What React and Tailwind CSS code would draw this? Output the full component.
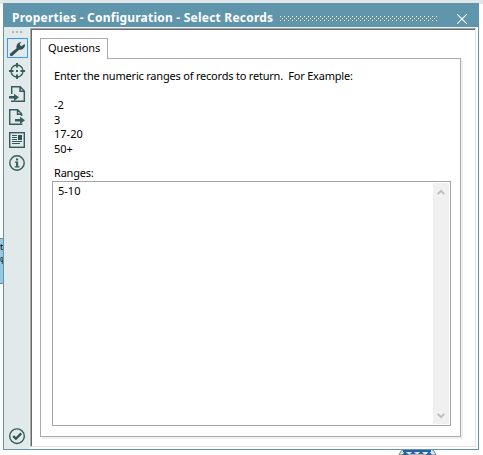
import React from "react";

function ToolIcon({ children }) {
  return (
    <svg width="17" height="17" viewBox="0 0 17 17" fill="none" stroke="#365b5c" strokeWidth="1.4" className="block">
      {children}
    </svg>
  );
}

function Toolbar() {
  return (
    <div className="flex w-[26px] shrink-0 flex-col items-center border-r border-[#edf2f2] bg-[#e1e9ea] pl-px">
      <div className="mt-[4px] flex h-[2px] gap-[2px]">
        <span className="h-[2px] w-[2px] bg-[#b5b8b8]" />
        <span className="h-[2px] w-[2px] bg-[#b5b8b8]" />
        <span className="h-[2px] w-[2px] bg-[#b5b8b8]" />
      </div>
      <button className="mt-[5px] ml-px flex h-[20px] w-[21px] items-center justify-center border border-[#3399ff]">
        <ToolIcon>
          <path d="M1.2 15.6C.6 14.8.8 14 1.5 13.3L7.6 8.3C6.9 5.2 8.8 2.2 12.4 2L10.6 4.4L12.2 6.2L14.9 4.4L16 4.2C16.3 7.7 13.6 10 10.1 9.8L3.8 15.6C2.9 16.3 1.8 16.3 1.2 15.6Z" fill="#2f5354" stroke="none" />
        </ToolIcon>
      </button>
      <div className="mt-[5px] ml-px flex flex-col gap-[6px]">
        <ToolIcon>
          <circle cx="8" cy="8" r="6" strokeWidth="1.3" />
          <path d="M8 0V4.5M8 11.5V16M0 8H4.5M11.5 8H16" strokeWidth="1.9" />
          <path d="M7 8H9" strokeWidth="2" />
        </ToolIcon>
        <ToolIcon>
          <path d="M2.7 8V.7H11.2L15.3 5V15.3H2.7V14.5M11 .7V5.2H15.3" />
          <path d="M0 10.1H5V7.7L10 11.3L5 15V12.6H0Z" fill="#365b5c" stroke="none" />
        </ToolIcon>
        <ToolIcon>
          <path d="M12.7 7V5L8.7 .7H.7V15.3H12.7V14.5M8.5 .7V5.2H12.7" />
          <path d="M6 10.1H11V7.7L16 11.3L11 15V12.6H6Z" fill="#365b5c" stroke="none" />
        </ToolIcon>
        <ToolIcon>
          <rect x=".7" y=".7" width="14.6" height="14.6" />
          <path d="M3 3.5H8M3 5.5H8M3 7.5H8M3 9.5H13M3 11.5H11" strokeWidth="1.1" />
          <rect x="9" y="3" width="4" height="5" fill="#2f5354" stroke="none" />
        </ToolIcon>
        <ToolIcon>
          <circle cx="8" cy="8" r="7.2" />
          <path d="M7 3.5H9.1V5.5H7ZM5.9 6.5H9.1V11.2H10.5V12.5H5.8V11.2H7.1V7.7H5.9Z" fill="#365b5c" stroke="none" />
        </ToolIcon>
      </div>
      <div className="mt-auto mb-[4px] ml-px">
        <ToolIcon>
          <circle cx="8" cy="8.2" r="7.3" />
          <path d="M4.2 8.2L6.9 10.7L12.2 5.4" strokeWidth="2.3" stroke="#2f5354" />
        </ToolIcon>
      </div>
    </div>
  );
}

function TitleBar() {
  return (
    <div className="flex h-[24px] shrink-0 items-start bg-[#6096ab]">
      <h1 className="ml-[9px] w-[262px] whitespace-pre pt-[6px] font-['Noto_Sans'] text-[12px] font-bold leading-[18px] tracking-[0.22px] text-white">
        Properties - Configuration - Select Records
      </h1>
      <svg width="158" height="5" className="mt-[13px] ml-[6px] block" shapeRendering="crispEdges">
        <defs>
          <pattern id="grip" width="4" height="4" patternUnits="userSpaceOnUse">
            <path d="M0 0h1v1h-1zM2 2h1v1h-1z" fill="#ffffff" />
          </pattern>
        </defs>
        <rect width="158" height="5" fill="url(#grip)" />
      </svg>
      <svg width="10" height="10" viewBox="0 0 10 10" className="mt-[11px] ml-[19px] block" stroke="#ffffff" strokeWidth="1.1">
        <path d="M0 0L10 10M10 0L0 10" />
      </svg>
    </div>
  );
}

function Arrow({ down }) {
  return (
    <svg width="8" height="6" viewBox="0 0 8 6" fill="none" stroke="#bdbdbd" strokeWidth="1.9" className="block">
      <path d={down ? "M.6 .8L4 4.2L7.4 .8" : "M.6 5.2L4 1.8L7.4 5.2"} />
    </svg>
  );
}

function Questions() {
  return (
    <div className="mt-[8px] ml-[8px] w-[423px]">
      <div className="relative z-10 -mb-px flex h-[21px] w-[68px] border border-b-0 border-[#a9abaf] bg-white pt-px pl-[7px] leading-[16px]">
        Questions
      </div>
      <div className="h-[379px] w-[421px] border border-[#a9abaf] pt-[9px] pl-[11px] shadow-[2px_2px_0_#f0f0f0]">
        <p className="ml-[2px] whitespace-pre leading-[15px] tracking-[-0.205px]">Enter the numeric ranges of records to return.  For Example:</p>
        <div className="mt-[15px] ml-[2px] leading-[14.7px]">
          <p>-2</p>
          <p>3</p>
          <p>17-20</p>
          <p>50+</p>
        </div>
        <p className="mt-[8px] ml-[2px] leading-[15px] tracking-[-0.2px]">Ranges:</p>
        <div className="mt-px flex h-[245px] w-[399px] justify-between border border-[#a4a5ac] p-px">
          <p className="ml-[4px] leading-[15px]">5-10</p>
          <div className="flex w-[16px] flex-col items-center justify-between bg-[#f0f0f0] pt-[6px] pb-[5px]">
            <Arrow />
            <Arrow down />
          </div>
        </div>
      </div>
    </div>
  );
}

export default function App() {
  return (
    <div className="relative flex h-[455px] w-[483px] overflow-hidden bg-white font-['Noto_Sans',sans-serif] text-[11px] text-black">
      <div className="absolute top-0 left-0 h-[4px] w-full bg-[#e1e6ea]" />
      <div className="absolute top-[238px] left-0 h-[46px] w-[3px] border-t border-b border-[#858b8e] bg-[#93c8df] text-[9px] leading-[14px]">
        <p className="mt-px">t</p>
        <p>%</p>
      </div>
      <svg className="absolute top-[449px] left-[398px]" width="40" height="6" viewBox="0 0 40 6">
        <path d="M1 6Q2 2 6 0H33Q37 2 38 6Z" fill="#dfe8f0" stroke="#6e7f8c" />
        <path d="M5 1H33V3H5ZM4 6L7 2L11 6ZM12 5L15 2L18 5ZM20 5L23 2L26 5ZM28 6L31 2L34 6Z" fill="#2762a6" />
      </svg>
      <section className="relative mt-[3px] ml-[3px] flex h-[447px] w-[476px] flex-col border border-t-0 border-[#6096ab] bg-white">
        <div className="-mx-px flex flex-col">
          <TitleBar />
        </div>
        <div className="flex min-h-0 flex-1">
          <Toolbar />
          <div className="flex flex-1 flex-col border-t border-[#edf2f2]">
            <div className="mr-[2px] mb-[2px] flex-1 border border-[#a5a5a5] border-r-[#e3e3e3] border-b-[#e3e3e3]">
              <div className="h-full border-t border-l border-[#696969]">
                <Questions />
              </div>
            </div>
          </div>
        </div>
      </section>
    </div>
  );
}
